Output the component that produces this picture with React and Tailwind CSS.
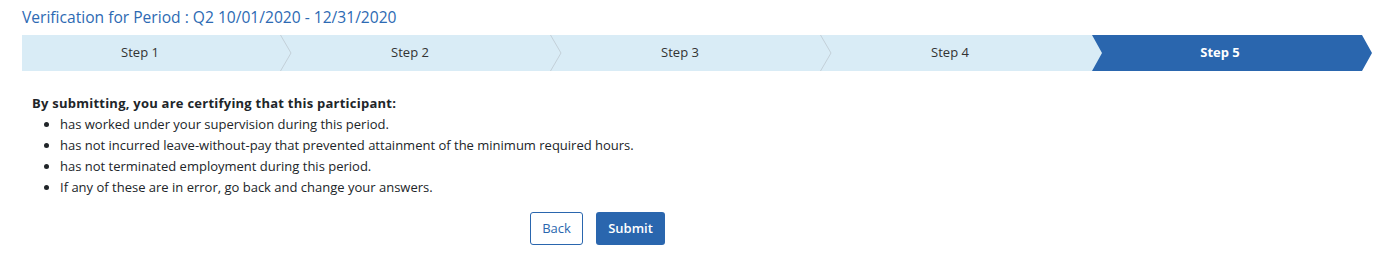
import React from "react";

const steps = ["Step 1", "Step 2", "Step 3", "Step 4"];

const Chevron = () => (
  <svg className="absolute right-0 top-0 h-[36px] w-[12px]" viewBox="0 0 12 36">
    <polyline points="0.5,0 11,18 0.5,36" fill="none" stroke="#c3d0d8" strokeWidth="1" />
  </svg>
);

const App = () => {
  return (
    <div className="bg-white w-[1382px] h-[261px] text-[13px] text-[#212529]" style={{ fontFamily: "'Open Sans', 'Noto Sans', sans-serif" }}>
      <div className="px-[22px] pt-[7px]">
        <h1 className="text-[15.6px] leading-[20px] text-[#2d6ab3]">Verification for Period : Q2 10/01/2020 - 12/31/2020</h1>

        <div className="mt-[8px] flex h-[36px] w-[1350px]">
          {steps.map((s, i) => (
            <div key={s} className="relative flex w-[270px] shrink-0 items-center justify-center bg-[#d9ecf6] pr-[34px] text-[#333]">
              {s}
              {i < 3 && <Chevron />}
            </div>
          ))}
          <div
            className="-ml-[10px] flex w-[280px] shrink-0 items-center justify-center bg-[#2a66ae] pr-[24px] font-bold text-white"
            style={{ clipPath: "polygon(0 0, 270px 0, 280px 50%, 270px 100%, 0 100%, 10px 50%)" }}
          >
            Step 5
          </div>
        </div>
      </div>

      <div className="pl-[32px] pt-[22px]">
        <p className="font-bold leading-[21px] tracking-[0.24px]">By submitting, you are certifying that this participant:</p>
        <ul className="list-disc pl-[28px] leading-[21px]">
          <li>has worked under your supervision during this period.</li>
          <li>has not incurred leave-without-pay that prevented attainment of the minimum required hours.</li>
          <li>has not terminated employment during this period.</li>
          <li>If any of these are in error, go back and change your answers.</li>
        </ul>
      </div>

      <div className="mt-[14px] ml-[530px] flex gap-[13px]">
        <button className="h-[33px] w-[53px] rounded-[3px] border border-[#2a66ae] bg-white text-[13px] text-[#2a66ae]">Back</button>
        <button className="h-[33px] w-[69px] rounded-[3px] bg-[#2a66ae] text-[13px] font-semibold text-white">Submit</button>
      </div>
    </div>
  );
};

export default App;
